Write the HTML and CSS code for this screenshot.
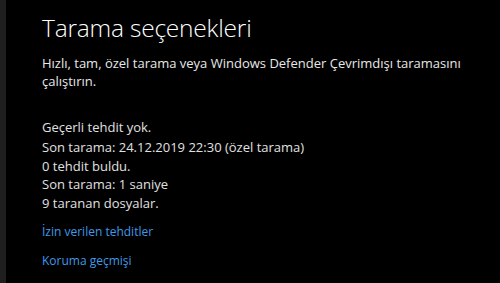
FILE: index.html
```html
<!DOCTYPE html>
<html lang="tr">
<head>
<meta charset="utf-8">
<link rel="stylesheet" href="styles.css">
</head>
<body>
<div class="app">
  <div class="rail"></div>
  <main class="content">
    <h1 class="title">Tarama seçenekleri</h1>
    <p class="desc">Hızlı, tam, özel tarama veya Windows Defender Çevrimdışı taramasını çalıştırın.</p>
    <div class="status">
      <p class="line first">Geçerli tehdit yok.</p>
      <p class="line">Son tarama: 24.12.2019 22:30 (özel tarama)</p>
      <p class="line">0 tehdit buldu.</p>
      <p class="line">Son tarama: 1 saniye</p>
      <p class="line">9 taranan dosyalar.</p>
    </div>
    <a class="link" href="#">İzin verilen tehditler</a>
    <a class="link" href="#">Koruma geçmişi</a>
  </main>
</div>
</body>
</html>
```

FILE: styles.css
```css
html, body {
  margin: 0;
  padding: 0;
  background: #000;
}
.app {
  display: flex;
  width: 500px;
  height: 283px;
  overflow: hidden;
  font-family: "Open Sans", "Noto Sans", sans-serif;
}
.rail {
  width: 6px;
  flex: none;
  background: #1f1f1f;
}
.content {
  flex: 1;
  padding: 11px 0 0 36px;
  display: flex;
  flex-direction: column;
  align-items: flex-start;
}
.title {
  margin: 0;
  font-size: 24.5px;
  font-weight: 300;
  color: #fff;
  line-height: 34px;
  letter-spacing: -0.2px;
}
.desc {
  margin: 9px 0 0;
  width: 420px;
  font-size: 13px;
  line-height: 18px;
  color: #e8e8e8;
}
.status {
  margin-top: 28px;
}
.line {
  margin: 0;
  font-size: 13px;
  line-height: 18.6px;
  color: #e0e0e0;
}
.line.first {
  margin-bottom: 1.5px;
}
.link {
  margin-top: 10px;
  font-size: 12px;
  line-height: 19px;
  color: #3f9ae6;
  text-decoration: none;
}
.link + .link {
  margin-top: 10px;
}
```
